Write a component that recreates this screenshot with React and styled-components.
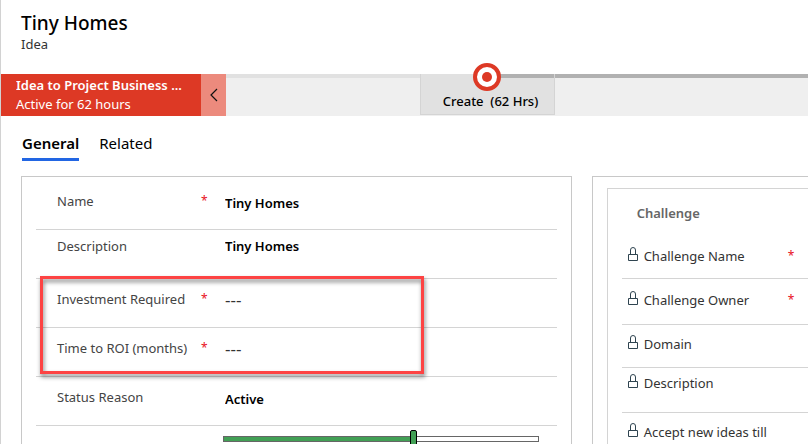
import React from "react";
import styled, { createGlobalStyle } from "styled-components";

const GlobalStyle = createGlobalStyle`
  *, *::before, *::after { box-sizing: border-box; }
  body {
    margin: 0;
    background: #fff;
    color: #000;
    font-family: "Noto Sans", "Open Sans", sans-serif;
    font-size: 13px;
    line-height: 20px;
  }
  button, input, textarea { font: inherit; color: inherit; }
`;

const Page = styled.div`
  height: 100vh;
  overflow: hidden;
  border-left: 1px solid #d2d2d2;
`;

const Header = styled.header`
  height: 74px;
  padding: 10px 20px 0;
`;

const Title = styled.h1`
  margin: 0;
  font-size: 19px;
  font-weight: 500;
  line-height: 26px;
`;

const Entity = styled.p`
  margin: 0;
  line-height: 16px;
  color: #333;
`;

const ProcessBar = styled.section`
  display: flex;
  height: 42px;
  background: #efefef;
`;

const ProcessName = styled.button`
  flex: none;
  width: 200px;
  padding: 0 15px;
  border: 0;
  background: #dd3925;
  color: #fff;
  text-align: left;
  line-height: 19px;
`;

const ProcessTitle = styled.span`
  display: block;
  overflow: hidden;
  font-weight: 600;
  white-space: nowrap;
`;

const ProcessTime = styled.span`
  display: block;
`;

const Collapse = styled.button`
  flex: none;
  display: grid;
  place-items: center;
  width: 25px;
  padding: 0;
  border: 0;
  background: #ec8a7d;
`;

const Track = styled.div`
  flex: 1;
  display: grid;
  grid-template-columns: 194fr 135px 253fr;
`;

const Rail = styled.div`
  height: 4px;
  background: ${(p) => (p.$ahead ? "#b1b1b1" : "#e1e1e1")};
`;

const Stage = styled.button`
  position: relative;
  height: 41px;
  padding: 14px 0 0 6px;
  border: 1px solid #d4d4d4;
  border-top: 0;
  background: linear-gradient(90deg, #e1e1e1 50%, #b1b1b1 50%) top / 100% 4px no-repeat #e1e1e1;
  font-weight: 500;
  white-space: pre;
`;

const StageMarker = styled.svg`
  position: absolute;
  top: -11px;
  left: calc(50% - 15px);
`;

const Tabs = styled.nav`
  display: flex;
  gap: 20px;
  padding: 16px 21px 0;
`;

const Tab = styled.button`
  padding: 0 0 4px;
  border: 0;
  border-bottom: 3px solid ${(p) => (p.$active ? "#2266e3" : "transparent")};
  background: none;
  font-size: 15px;
  line-height: 22px;
  font-weight: ${(p) => (p.$active ? 600 : 400)};
`;

const Columns = styled.main`
  display: grid;
  grid-template-columns: minmax(0, 28fr) minmax(0, 11fr);
  gap: 20px;
  height: 100%;
  padding: 15px 0 0 20px;
`;

const Panel = styled.section`
  padding: 0 14px;
  border: 1px solid #c8c8c8;
`;

const SidePanel = styled.section`
  padding: 11px 0 0 14px;
  border: solid #c8c8c8;
  border-width: 1px 0 0 1px;
`;

const Card = styled.div`
  height: 100%;
  padding: 14px 0 0 14px;
  border: solid #d4d4d4;
  border-width: 1px 0 0 1px;
`;

const CardTitle = styled.h2`
  margin: 0;
  padding-left: 15px;
  font-size: 13px;
  font-weight: 600;
  line-height: 20px;
  color: #666;
`;

const Field = styled.div`
  display: grid;
  grid-template-columns: 144px 24px minmax(0, 1fr);
  align-items: start;
  height: ${(p) => (p.$first ? 53 : 49)}px;
  padding: ${(p) => (p.$first ? 14 : p.$raised ? 6 : 10)}px 0 0 21px;
  border-bottom: 1px solid #d4d4d4;
`;

const Label = styled.label`
  grid-column: 1;
  color: #444;
  white-space: nowrap;
`;

const Required = styled.span`
  font-size: 12px;
  color: #e81123;
`;

const TextInput = styled.input`
  grid-column: 3;
  width: 100%;
  height: 20px;
  margin: 2px 0 0;
  padding: 0;
  border: 0;
  outline: 0;
  background: none;
  font-weight: 600;
  &::placeholder {
    color: #333;
    font-size: 17px;
    font-weight: 400;
    opacity: 1;
  }
`;

const TextArea = styled.textarea`
  grid-column: 3;
  width: 100%;
  height: 20px;
  padding: 0;
  border: 0;
  outline: 0;
  resize: none;
  overflow: hidden;
  background: none;
  font-weight: 600;
`;

const Highlight = styled.div`
  position: relative;
  &::after {
    content: "";
    position: absolute;
    inset: -3px 25.5% 3px 4px;
    border: 3px solid #fd4343;
    filter: drop-shadow(1px 3px 2px rgba(0, 0, 0, 0.5));
    pointer-events: none;
  }
`;

const SliderRow = styled.div`
  padding: 4px 18px 0 187px;
`;

const Slider = styled.input`
  display: block;
  width: 100%;
  height: 18px;
  margin: 0;
  appearance: none;
  background: linear-gradient(#42a055, #42a055) 1px 50% / ${(p) => p.value}% 4px no-repeat,
    linear-gradient(#fff, #fff) 1px 50% / calc(100% - 2px) 4px no-repeat,
    linear-gradient(#666, #666) 0 50% / 100% 6px no-repeat;
  &::-webkit-slider-thumb {
    appearance: none;
    width: 7px;
    height: 18px;
    border: 1px solid #000;
    border-radius: 2px;
    background: #42a055;
  }
`;

const LockedField = styled.div`
  display: grid;
  grid-template-columns: 17px 144px 1fr;
  align-items: start;
  height: ${(p) => p.$height}px;
  padding: ${(p) => p.$top}px 0 0 5px;
  border-bottom: 1px solid #d4d4d4;
  color: #333;
  white-space: nowrap;
`;

const LockIcon = () => (
  <svg width="12" height="16" viewBox="0 0 12 16" fill="none" stroke="#2f4450" aria-hidden="true">
    <path d="M1.5 8.5h9v6h-9z" />
    <path d="M3.5 8.5V4a2.5 2.5 0 0 1 5 0v4.5" />
  </svg>
);

const lockedFields = [
  { label: "Challenge Name", required: true, height: 56, top: 23 },
  { label: "Challenge Owner", required: true, height: 46, top: 11 },
  { label: "Domain", height: 43, top: 9 },
  { label: "Description", height: 45, top: 5 },
  { label: "Accept new ideas till", height: 50, top: 9 },
];

function TextField({ id, label, required, defaultValue, first }) {
  return (
    <Field $first={first}>
      <Label htmlFor={id}>{label}</Label>
      {required && <Required>*</Required>}
      <TextInput id={id} defaultValue={defaultValue} placeholder="---" />
    </Field>
  );
}

export default function App() {
  const [progress, setProgress] = React.useState(60.5);
  return (
    <Page>
      <GlobalStyle />
      <Header>
        <Title>Tiny Homes</Title>
        <Entity>Idea</Entity>
      </Header>
      <ProcessBar>
        <ProcessName>
          <ProcessTitle>Idea to Project Business ...</ProcessTitle>
          <ProcessTime>Active for 62 hours</ProcessTime>
        </ProcessName>
        <Collapse aria-label="Collapse">
          <svg width="8" height="14" viewBox="0 0 8 14" fill="none" stroke="#111" strokeWidth="1.2">
            <path d="M7 1L1 7l6 6" />
          </svg>
        </Collapse>
        <Track>
          <Rail />
          <Stage>
            <StageMarker width="28" height="28" viewBox="0 0 28 28" aria-hidden="true">
              <circle cx="14" cy="14" r="12" fill="#fff" stroke="#dd3925" strokeWidth="4" />
              <circle cx="14" cy="14" r="5" fill="#dd3925" />
            </StageMarker>
            {"Create  (62 Hrs)"}
          </Stage>
          <Rail $ahead />
        </Track>
      </ProcessBar>
      <Tabs>
        <Tab $active>General</Tab>
        <Tab>Related</Tab>
      </Tabs>
      <Columns>
        <Panel>
          <TextField id="name" label="Name" required defaultValue="Tiny Homes" first />
          <Field $raised>
            <Label htmlFor="description">Description</Label>
            <TextArea id="description" rows={1} defaultValue="Tiny Homes" />
          </Field>
          <Highlight>
            <TextField id="investment" label="Investment Required" required />
            <TextField id="roi" label="Time to ROI (months)" required />
          </Highlight>
          <TextField id="status" label="Status Reason" defaultValue="Active" />
          <SliderRow>
            <Slider
              type="range"
              aria-label="Progress"
              step="0.5"
              value={progress}
              onChange={(e) => setProgress(Number(e.target.value))}
            />
          </SliderRow>
        </Panel>
        <SidePanel>
          <Card>
            <CardTitle>Challenge</CardTitle>
            {lockedFields.map((f) => (
              <LockedField key={f.label} $height={f.height} $top={f.top}>
                <LockIcon />
                <span>{f.label}</span>
                {f.required && <Required>*</Required>}
              </LockedField>
            ))}
          </Card>
        </SidePanel>
      </Columns>
    </Page>
  );
}
